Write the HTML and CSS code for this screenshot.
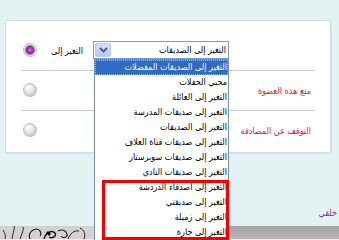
FILE: index.html
```html
<!DOCTYPE html>
<html lang="ar">
<head>
  <meta charset="UTF-8">
  <title>تغيير التصنيف</title>
  <link rel="stylesheet" href="styles.css">
</head>
<body>
  <div class="panel">
    <div class="row">
      <span class="radio on"></span>
      <span class="label">التغير إلى</span>
      <div class="picker">
        <div class="select">
          <span class="arrow">
            <svg width="9" height="6" viewBox="0 0 9 6"><path d="M1 1 L4.5 4.5 L8 1" fill="none" stroke="#4d6185" stroke-width="2"/></svg>
          </span>
          <span class="value">التغير إلى الصديقات</span>
        </div>
        <ul class="options">
          <li class="active">التغير إلى الصديقات المفضلات</li>
          <li>محبي الحفلات</li>
          <li>التغير إلى العائلة</li>
          <li>التغير إلى صديقات المدرسة</li>
          <li>التغير إلى الصديقات</li>
          <li>التغير إلى صديقات قناة العلاف</li>
          <li>التغير إلى صديقات سوبرستار</li>
          <li>التغير إلى صديقات النادي</li>
          <li>التغير إلى أصدقاء الدردشة</li>
          <li>التغير إلى صديقتي</li>
          <li>التغير إلى زميلة</li>
          <li>التغير إلى جارة</li>
        </ul>
        <div class="mark"></div>
      </div>
    </div>
    <div class="row">
      <span class="radio"></span>
      <span class="action">منع هذه العضوة</span>
    </div>
    <div class="row last">
      <span class="radio"></span>
      <span class="action">التوقف عن المصادقة</span>
    </div>
  </div>

  <div class="note">خلقي</div>

  <div class="strip">
    <div class="art">
      <svg width="95" height="13" viewBox="0 0 95 13">
        <path d="M12 13 C13 6 15 3 14 0" fill="none" stroke="#222" stroke-width="1"/>
        <path d="M20 13 C22 7 24 4 23 1" fill="none" stroke="#222" stroke-width="1"/>
        <path d="M30 13 C28 8 31 4 36 3 C40 3 42 7 40 10" fill="none" stroke="#222" stroke-width="1.2"/>
        <path d="M44 13 C46 6 52 4 55 7 C57 10 52 13 49 11" fill="none" stroke="#111" stroke-width="1.4"/>
        <path d="M47 6 L50 9" fill="none" stroke="#000" stroke-width="2.5"/>
        <path d="M58 5 C62 3 66 4 67 8 C68 11 63 13 61 10" fill="none" stroke="#222" stroke-width="1.2"/>
        <path d="M68 13 C70 8 74 4 79 5" fill="none" stroke="#222" stroke-width="1"/>
        <path d="M80 2 C84 4 86 8 84 13" fill="none" stroke="#222" stroke-width="1"/>
        <path d="M3 4 C5 7 6 10 5 13" fill="none" stroke="#333" stroke-width="1"/>
      </svg>
    </div>
  </div>
</body>
</html>
```

FILE: styles.css
```css
html, body {
  margin: 0;
  height: 240px;
  overflow: hidden;
}
body {
  background: #e3f2f3;
  font-family: "DejaVu Sans Condensed", "DejaVu Sans", sans-serif;
  font-size: 9px;
  color: #000;
}
.panel {
  margin: 20px 8px 0 5px;
  height: 133px;
  padding-top: 10px;
  background: #fff;
  border: 1px solid #cfdfdf;
  box-shadow: 1px 1px 0 #d6e6e6;
  box-sizing: border-box;
  position: relative;
  z-index: 1;
}
.row {
  display: flex;
  align-items: center;
  height: 40px;
  margin: 0 15px;
  border-bottom: 1px solid #cdcdcd;
  box-sizing: border-box;
}
.row.last {
  border-bottom: none;
}
.radio {
  width: 14px;
  height: 14px;
  margin: -2px 0 0 2px;
  border-radius: 50%;
  border: 1px solid #bcbcbc;
  box-sizing: border-box;
  background: radial-gradient(circle at 38% 32%, #ffffff 0, #f0f0f0 25%, #cfcfcf 70%, #b5b5b5 100%);
  flex: none;
}
.radio.on {
  background: radial-gradient(circle at 50% 50%, #d88de0 0, #a83ab8 2px, #8f2aa0 4px, #c9c9c9 5px, #eeeeee 6px);
}
.label {
  width: 46px;
  margin-right: 10px;
  text-align: right;
  direction: rtl;
  white-space: nowrap;
}
.picker {
  position: relative;
  width: 136px;
}
.select {
  display: flex;
  align-items: center;
  height: 18px;
  border: 1px solid #7f9db9;
  box-sizing: border-box;
  background: #fff;
  margin-top: -1px;
}
.arrow {
  display: flex;
  align-items: center;
  justify-content: center;
  width: 16px;
  height: 14px;
  margin-left: 1px;
  border: 1px solid #b9cbf3;
  border-radius: 2px;
  box-sizing: border-box;
  background: linear-gradient(#d3e0fb, #b6c9f7);
}
.value {
  flex: 1;
  text-align: right;
  direction: rtl;
  padding-right: 2px;
  white-space: nowrap;
  overflow: hidden;
}
.options {
  position: absolute;
  top: 17px;
  left: 1px;
  width: 135px;
  margin: 0;
  padding: 0;
  list-style: none;
  background: #fff;
  border: 1px solid #7a8ea8;
  box-sizing: border-box;
  direction: rtl;
  z-index: 5;
}
.options li {
  height: 15px;
  line-height: 15px;
  padding-right: 1px;
  text-align: right;
  white-space: nowrap;
  overflow: hidden;
}
.options li.active {
  background: #316ac5;
  color: #fff;
  outline: 1px dotted #e8b040;
  outline-offset: -1px;
}
.mark {
  position: absolute;
  top: 138px;
  left: 9px;
  width: 127px;
  height: 60px;
  border: 3px solid #f30000;
  box-sizing: border-box;
  z-index: 6;
}
.action {
  margin-left: auto;
  margin-right: 4px;
  color: #e3162f;
  direction: rtl;
  white-space: nowrap;
}
.note {
  margin-top: 54px;
  height: 13px;
  line-height: 13px;
  text-align: right;
  padding-right: 2px;
  color: #8d2a8e;
  direction: rtl;
}
.strip {
  margin-top: 6px;
  height: 13px;
  background: linear-gradient(#9d9d9d 0, #a8a8a8 2px, #b6b6b6 100%);
}
.art {
  width: 95px;
  height: 13px;
  background: #d2d2d2;
}
.art svg {
  display: block;
}
```
